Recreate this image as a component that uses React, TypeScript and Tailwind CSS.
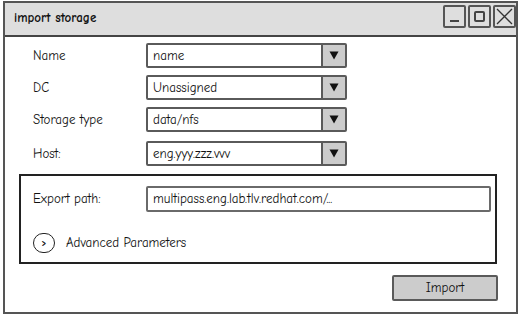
import React from "react";

const font = { fontFamily: '"Comic Sans MS", "Comic Neue", "Open Sans", sans-serif' };

function Arrow() {
  return (
    <svg width="10" height="9" viewBox="0 0 10 9">
      <polygon points="0.5,0.5 9.5,0.5 5,8.5" fill="#111" />
    </svg>
  );
}

function Select({ value }: { value: string }) {
  return (
    <div className="w-[201px] h-[25px] border-2 border-[#5a5a5a] rounded-[2px] flex bg-white">
      <div className="flex-1 flex items-center pl-[5px] text-[13px] text-[#111]">{value}</div>
      <div className="w-[24px] h-full bg-[#cccccc] border-l-2 border-[#5a5a5a] flex items-center justify-center">
        <Arrow />
      </div>
    </div>
  );
}

function Row({ label, value, extra }: { label: string; value: string; extra?: string }) {
  return (
    <div className={"flex items-center " + (extra ?? "")}>
      <div className="w-[113px] text-[13px] text-[#111]">{label}</div>
      <Select value={value} />
    </div>
  );
}

export default function App() {
  return (
    <div className="w-[522px] h-[319px] bg-white" style={font}>
      <div className="ml-[3px] pt-[1px]">
        <div className="w-[515px] h-[313px] border-2 border-[#555] flex flex-col bg-white">
          <div className="h-[34px] bg-[#dedede] border-b-2 border-[#444] flex items-center pl-[9px] pr-[0px]">
            <span className="text-[13px] font-bold text-[#111] -mt-[2px]">import storage</span>
            <div className="ml-auto flex gap-[2px] self-start mt-[2px]">
              <div className="w-[23px] h-[23px] border-2 border-[#555] rounded-[2px] flex items-end justify-center pb-[4px]">
                <div className="w-[9px] h-[2px] bg-[#444]" />
              </div>
              <div className="w-[23px] h-[23px] border-2 border-[#555] rounded-[2px] flex items-center justify-center">
                <div className="w-[11px] h-[11px] border-2 border-[#444] rounded-[2px]" />
              </div>
              <div className="w-[23px] h-[23px] border-2 border-[#555] rounded-[2px] flex items-center justify-center">
                <svg width="17" height="17" viewBox="0 0 17 17">
                  <path d="M1 1 L16 16 M16 1 L1 16" stroke="#333" strokeWidth="1.3" fill="none" />
                </svg>
              </div>
            </div>
          </div>
          <div className="flex-1 flex flex-col pl-[28px] pt-[6px]">
            <div className="flex flex-col gap-[7px]">
              <Row label="Name" value="name" />
              <Row label="DC" value="Unassigned" />
              <Row label="Storage type" value="data/nfs" />
              <Row label="Host:" value="eng.yyy.zzz.vvv" extra="mt-[2px]" />
            </div>
            <div className="-ml-[14px] mt-[8px] w-[478px] h-[90px] border-2 border-[#222] flex flex-col pl-[12px] pt-[10px] pr-[4px]">
              <div className="flex items-center">
                <div className="w-[113px] text-[13px] text-[#111]">Export path:</div>
                <div className="flex-1 h-[26px] border-2 border-[#6a6a6a] rounded-[2px] flex items-center pl-[5px] text-[13px] text-[#111]">
                  multipass.eng.lab.tlv.redhat.com/...
                </div>
              </div>
              <div className="flex items-center mt-[21px]">
                <div className="w-[22px] h-[20px] border-[1.5px] border-[#222] rounded-full flex items-center justify-center text-[9px] font-bold text-[#111] leading-none">
                  &gt;
                </div>
                <span className="ml-[11px] text-[13px] text-[#111]">Advanced Parameters</span>
              </div>
            </div>
            <div className="flex justify-end mt-[11px] pr-[18px]">
              <div className="w-[106px] h-[26px] bg-[#cccccc] border-2 border-[#5a5a5a] rounded-[2px] flex items-center justify-center text-[13px] text-[#111]">
                Import
              </div>
            </div>
          </div>
        </div>
      </div>
    </div>
  );
}
